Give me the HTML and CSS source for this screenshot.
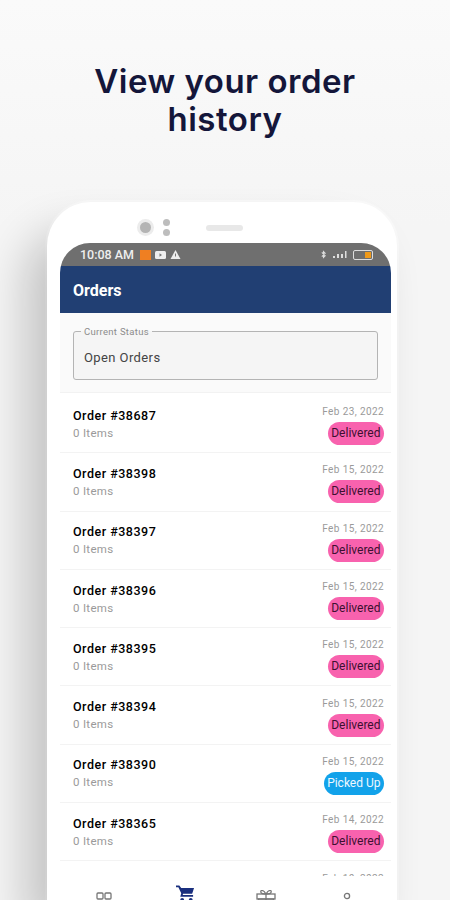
FILE: index.html
```html
<!DOCTYPE html>
<html lang="en">
<head>
    <meta charset="UTF-8">
    <meta name="viewport" content="width=device-width, initial-scale=1.0">
    <title>View your order history</title>
    <link rel="stylesheet" href="styles.css">
</head>
<body>
    <h1 class="headline">View your order<br>history</h1>

    <div class="phone">
        <!-- Camera and earpiece -->
        <div class="bezel">
            <span class="lens"></span>
            <span class="sensors"><i></i><i></i></span>
            <span class="speaker"></span>
        </div>

        <div class="screen">
            <div class="status-bar">
                <span class="clock">10:08 AM</span>
                <span class="notif-orange"></span>
                <svg class="notif" width="11" height="8" viewBox="0 0 11 8"><rect width="11" height="8" rx="1.5" fill="#eee"/><path d="M4.500 2.200 7 4 4.500 5.800Z" fill="#777"/></svg>
                <svg class="notif" width="11" height="9" viewBox="0 0 10 9"><path d="M5 0 10 9H0Z" fill="#eee"/><rect x="4.500" y="3.500" width="1" height="3" fill="#777"/></svg>
                <span class="status-right">
                    <svg width="5" height="9" viewBox="0 0 6 9"><path d="M1 2 5 6 3 8V1L5 3 1 7" fill="none" stroke="#ddd" stroke-width="1.300"/></svg>
                    <svg width="15" height="9" viewBox="0 0 15 9"><path d="M1 6h2v2H1ZM5 1h1M5 4h2v4H5ZM9 4h2v4H9ZM13 1h1.500v7H13Z" fill="#ddd"/></svg>
                    <span class="battery"><span class="battery-level"></span></span>
                </span>
            </div>

            <header class="app-bar">Orders</header>

            <div class="status-wrap">
                <fieldset class="status-field">
                    <legend>Current Status</legend>
                    <span>Open Orders</span>
                </fieldset>
            </div>

            <ul class="orders">
                <li class="order">
                    <div><div class="order-no">Order #38687</div><div class="order-items">0 Items</div></div>
                    <div class="order-side"><div class="order-date">Feb 23, 2022</div><span class="pill delivered">Delivered</span></div>
                </li>
                <li class="order">
                    <div><div class="order-no">Order #38398</div><div class="order-items">0 Items</div></div>
                    <div class="order-side"><div class="order-date">Feb 15, 2022</div><span class="pill delivered">Delivered</span></div>
                </li>
                <li class="order">
                    <div><div class="order-no">Order #38397</div><div class="order-items">0 Items</div></div>
                    <div class="order-side"><div class="order-date">Feb 15, 2022</div><span class="pill delivered">Delivered</span></div>
                </li>
                <li class="order">
                    <div><div class="order-no">Order #38396</div><div class="order-items">0 Items</div></div>
                    <div class="order-side"><div class="order-date">Feb 15, 2022</div><span class="pill delivered">Delivered</span></div>
                </li>
                <li class="order">
                    <div><div class="order-no">Order #38395</div><div class="order-items">0 Items</div></div>
                    <div class="order-side"><div class="order-date">Feb 15, 2022</div><span class="pill delivered">Delivered</span></div>
                </li>
                <li class="order">
                    <div><div class="order-no">Order #38394</div><div class="order-items">0 Items</div></div>
                    <div class="order-side"><div class="order-date">Feb 15, 2022</div><span class="pill delivered">Delivered</span></div>
                </li>
                <li class="order">
                    <div><div class="order-no">Order #38390</div><div class="order-items">0 Items</div></div>
                    <div class="order-side"><div class="order-date">Feb 15, 2022</div><span class="pill picked">Picked Up</span></div>
                </li>
                <li class="order">
                    <div><div class="order-no">Order #38365</div><div class="order-items">0 Items</div></div>
                    <div class="order-side"><div class="order-date">Feb 14, 2022</div><span class="pill delivered">Delivered</span></div>
                </li>
                <!-- Only the top of this row's date shows above the tabs -->
                <li class="order order-cut">
                    <div class="order-date">Feb 10, 2022</div>
                </li>
            </ul>

            <!-- Bottom navigation, cut off by the bottom of the picture -->
            <nav class="tabs">
                <svg class="tab" width="18" height="24" viewBox="0 0 18 24" fill="none" stroke="#777" stroke-width="1.300"><rect x="2" y="1" width="6" height="6" rx="1"/><rect x="10" y="1" width="6" height="6" rx="1"/><rect x="2" y="10" width="6" height="6" rx="1"/><rect x="10" y="10" width="6" height="6" rx="1"/></svg>
                <svg class="tab tab-cart" width="19" height="24" viewBox="0 0 20 24"><path d="M0 1h3.500l2 2.500H19l-2 6H7.500L7 11h11v1.800H4.500L5.500 9 2.500 2.800H0Z" fill="#1a2f7e"/><circle cx="6.500" cy="16" r="2" fill="#1a2f7e"/><circle cx="15.500" cy="16" r="2" fill="#1a2f7e"/></svg>
                <svg class="tab tab-gift" width="20" height="24" viewBox="0 0 20 24" fill="none" stroke="#777" stroke-width="1.300"><rect x="1" y="4" width="18" height="5"/><rect x="2.500" y="9" width="15" height="8"/><path d="M10 4v13M10 4C7-1 4 0 5 2.500 5.500 4 10 4 10 4ZM10 4c3-5 6-4 5-1.500C14.500 4 10 4 10 4Z"/></svg>
                <svg class="tab" width="14" height="24" viewBox="0 0 14 24" fill="none" stroke="#777" stroke-width="1.300"><circle cx="7" cy="4" r="2.600"/><path d="M1 15c0-5 2-6 6-6s6 1 6 6"/></svg>
            </nav>
        </div>
    </div>
</body>
</html>
```

FILE: styles.css
```css
html, body {
    margin: 0;
    padding: 0;
    height: 900px;
    overflow: hidden;
}

body {
    background: linear-gradient(180deg, #fafafa 0%, #f5f5f5 25%);
    font-family: Roboto, "Liberation Sans", sans-serif;
    display: flex;
    flex-direction: column;
    align-items: flex-start;
}

/* Headline above the phone */
.headline {
    width: 100%;
    height: 202px;
    flex-shrink: 0;
    margin: 0;
    padding-top: 62px;
    box-sizing: border-box;
    text-align: center;
    font-family: Inter, sans-serif;
    font-size: 33px;
    line-height: 38px;
    font-weight: 600;
    letter-spacing: 0.5px;
    color: #14163a;
}

/* Phone body, the shadow falls to the left only */
.phone {
    width: 350px;
    height: 698px;
    margin-left: 47px;
    padding: 0 6px 0 13px;
    box-sizing: border-box;
    flex-shrink: 0;
    background: #fff;
    border-radius: 44px 44px 0 0;
    box-shadow: -22px 30px 45px rgba(0, 0, 0, 0.2), 0 0 0 2px #f9f9f9;
}

.bezel {
    height: 41px;
    display: flex;
    align-items: center;
    padding: 10px 0 0 80px;
    box-sizing: border-box;
}

.lens {
    width: 11px;
    height: 11px;
    border-radius: 50%;
    background: #b4b4b4;
    box-shadow: 0 0 0 3px #ececec;
}

.sensors {
    display: flex;
    flex-direction: column;
    gap: 3px;
    margin-left: 12px;
}

.sensors i {
    display: block;
    width: 7px;
    height: 7px;
    border-radius: 50%;
    background: #bdbdbd;
}

.speaker {
    width: 37px;
    height: 6px;
    margin-left: 36px;
    border-radius: 3px;
    background: #e8e8e8;
}

.screen {
    width: 331px;
    background: #fff;
    border-radius: 30px 30px 0 0;
    overflow: hidden;
}

/* Android status bar */
.status-bar {
    height: 23px;
    padding: 0 18px 0 20px;
    display: flex;
    align-items: center;
    gap: 4px;
    background: #6f6f6f;
    color: #eee;
}

.clock {
    font-size: 12.5px;
    font-weight: 500;
    margin-right: 2px;
}

.notif-orange {
    width: 11px;
    height: 10px;
    background: #ef7f22;
}

.status-right {
    margin-left: auto;
    display: flex;
    align-items: center;
    gap: 6px;
}

.battery {
    width: 16px;
    height: 6px;
    border: 1px solid #ddd;
    border-radius: 2px;
    display: flex;
    justify-content: flex-end;
    padding: 1px;
}

.battery-level {
    width: 6px;
    background: #f09a1a;
}

.app-bar {
    height: 47px;
    padding: 1px 0 0 13px;
    display: flex;
    align-items: center;
    box-sizing: border-box;
    background: #213f73;
    color: #fff;
    font-size: 16px;
    font-weight: 700;
}

/* Outlined status field */
.status-wrap {
    padding: 13px 13px 12px;
    background: #fafafa;
    border-bottom: 1px solid #f2f2f2;
}

.status-field {
    height: 54px;
    margin: 0;
    padding: 0 0 0 10px;
    box-sizing: border-box;
    display: block;
    border: 1.5px solid #b4b4b4;
    border-radius: 3px;
    background: #f5f5f5;
    font-size: 13px;
    letter-spacing: 0.4px;
    color: #444;
}

.status-field legend {
    padding: 0 3px;
    margin-left: -3px;
    font-size: 9.5px;
    letter-spacing: 0.3px;
    line-height: 11px;
    color: #8c8c8c;
}

.status-field span {
    display: block;
    padding-top: 13px;
}

/* Order list */
.orders {
    height: 483px;
    margin: 0;
    padding: 2px 0 0;
    box-sizing: border-box;
    list-style: none;
    overflow: hidden;
}

.order {
    height: 58.3px;
    padding: 0 7px 0 13px;
    box-sizing: border-box;
    display: flex;
    justify-content: space-between;
    align-items: center;
    border-bottom: 1px solid #f3f3f3;
}

.order-cut {
    justify-content: flex-end;
    align-items: flex-start;
    padding-top: 11px;
    border-bottom: 0;
}

.order-no {
    margin-top: 1px;
    font-size: 12.5px;
    font-weight: 500;
    letter-spacing: 0.5px;
    line-height: 17px;
    color: #000;
}

.order-items {
    margin-top: 1px;
    font-size: 11.5px;
    letter-spacing: 0.3px;
    line-height: 17px;
    color: #9a9a9a;
}

.order-side {
    padding-top: 3px;
    display: flex;
    flex-direction: column;
    align-items: flex-end;
}

.order-date {
    font-size: 10px;
    letter-spacing: 0.4px;
    line-height: 14px;
    margin-bottom: 3px;
    color: #9a9a9a;
}

.pill {
    height: 23px;
    padding: 0 3.5px;
    border-radius: 12px;
    font-size: 12px;
    line-height: 23px;
}

.delivered {
    background: #f862ae;
    color: #3c1030;
}

.picked {
    background: #12a2ea;
    color: #eef8ff;
}

/* Bottom tabs */
.tabs {
    height: 24px;
    padding: 16px 0 0 35px;
    box-sizing: border-box;
    display: flex;
    align-items: flex-start;
    overflow: hidden;
    background: #fff;
}

.tab {
    margin-right: 63px;
    flex-shrink: 0;
}

.tab-cart {
    margin-top: -8px;
    margin-right: 61px;
}

.tab-gift {
    margin-top: -2px;
    margin-right: 64px;
}
```
